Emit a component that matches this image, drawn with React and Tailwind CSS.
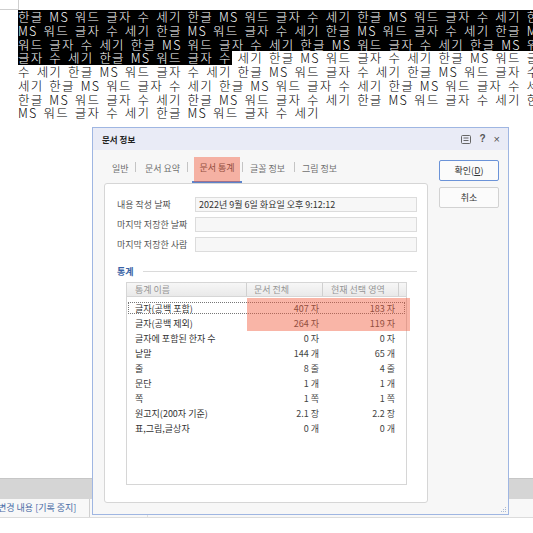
import React from 'react';

const lines = [
  { full: true, text: '한글 MS 워드 글자 수 세기 한글 MS 워드 글자 수 세기 한글 MS 워드 글자 수 세기 한글 MS' },
  { full: true, text: 'MS 워드 글자 수 세기 한글 MS 워드 글자 수 세기 한글 MS 워드 글자 수 세기 한글 MS 워드' },
  { full: true, text: '워드 글자 수 세기 한글 MS 워드 글자 수 세기 한글 MS 워드 글자 수 세기 한글 MS 워드' },
  { sel: '글자 수 세기 한글 MS 워드 글자 수', text: ' 세기 한글 MS 워드 글자 수 세기 한글 MS 워드 글자 수' },
  { text: '수 세기 한글 MS 워드 글자 수 세기 한글 MS 워드 글자 수 세기 한글 MS 워드 글자 수' },
  { text: '세기 한글 MS 워드 글자 수 세기 한글 MS 워드 글자 수 세기 한글 MS 워드 글자 수 세기' },
  { text: '한글 MS 워드 글자 수 세기 한글 MS 워드 글자 수 세기 한글 MS 워드 글자 수 세기 한글' },
  { text: 'MS 워드 글자 수 세기 한글 MS 워드 글자 수 세기' },
];

const stats = [
  ['글자(공백 포함)', '407 자', '183 자'],
  ['글자(공백 제외)', '264 자', '119 자'],
  ['글자에 포함된 한자 수', '0 자', '0 자'],
  ['낱말', '144 개', '65 개'],
  ['줄', '8 줄', '4 줄'],
  ['문단', '1 개', '1 개'],
  ['쪽', '1 쪽', '1 쪽'],
  ['원고지(200자 기준)', '2.1 장', '2.2 장'],
  ['표,그림,글상자', '0 개', '0 개'],
];

function Sep() {
  return <span className="w-px h-[10px] bg-[#c4c4c4] self-center" />;
}

function Field({ label, value }) {
  return (
    <div className="flex items-center h-[15px] mb-[5px]">
      <div className="w-[90px] pl-[12px] whitespace-nowrap text-[#555]">{label}</div>
      <div className="w-[222px] h-[15px] border border-[#dcdcdc] bg-[#f7f7f7] flex items-center pl-[3px] whitespace-nowrap text-[#333]">
        {value}
      </div>
    </div>
  );
}

function DocInfoDialog() {
  return (
    <div className="absolute left-[92px] top-[127px] w-[417px] h-[388px] border border-[#9fb6e2] bg-[#f7f7f7] flex flex-col font-['Noto_Sans_CJK_KR',sans-serif] text-[9px] leading-none text-[#333]">
      {/* title bar */}
      <div className="h-[22px] bg-[#e9ebf6] flex items-center pl-[9px] pr-[8px]">
        <span className="text-[8.5px] font-bold text-[#222]">문서 정보</span>
        <div className="ml-auto flex items-center gap-[8px] text-[#555]">
          <svg width="10" height="9" viewBox="0 0 10 9" fill="none" stroke="#666" strokeWidth="1">
            <rect x="0.5" y="0.5" width="9" height="8" rx="1" />
            <line x1="2.5" y1="3" x2="7.5" y2="3" />
            <line x1="2.5" y1="5.5" x2="7.5" y2="5.5" />
          </svg>
          <span className="font-bold text-[10px] font-['Liberation_Sans',sans-serif]">?</span>
          <span className="text-[11px] font-['Liberation_Sans',sans-serif]">×</span>
        </div>
      </div>

      {/* body */}
      <div className="flex flex-1 pl-[11px]">
        <div className="w-[324px] flex flex-col">
          {/* tabs */}
          <div className="h-[33px] flex items-stretch pl-[8px] text-[#707070] whitespace-nowrap">
            <span className="w-[23px] flex items-center pt-[3px]">일반</span>
            <Sep />
            <span className="ml-[9px] w-[42px] flex items-center pt-[3px]">문서 요약</span>
            <Sep />
            <span className="ml-[4px] w-[50px] flex items-center justify-center pt-[3px] border-b-2 border-[#5d84cc] text-[#444]">
              문서 통계
            </span>
            <Sep />
            <span className="ml-[7px] w-[44px] flex items-center pt-[3px]">글꼴 정보</span>
            <Sep />
            <span className="ml-[7px] flex items-center pt-[3px]">그림 정보</span>
          </div>

          {/* panel */}
          <div className="h-[320px] border border-[#d6d6d6] rounded-[3px] bg-white pt-[13px]">
            <Field label="내용 작성 날짜" value="2022년 9월 6일 화요일 오후 9:12:12" />
            <Field label="마지막 저장한 날짜" value="" />
            <Field label="마지막 저장한 사람" value="" />

            <div className="flex items-center mt-[13px] pl-[12px] pr-[10px] h-[12px]">
              <span className="font-bold text-[#3963a6]">통계</span>
              <span className="flex-1 h-px bg-[#dadada] ml-[9px]" />
            </div>

            {/* table */}
            <div className="ml-[21px] mt-[5px] w-[281px] h-[203px] border border-[#d6d6d6] whitespace-nowrap">
              <div className="h-[14px] flex bg-gradient-to-b from-[#f7f7f7] to-[#e9e9e9] border-b border-[#d6d6d6] text-[#959595]">
                <div className="w-[120px] pl-[8px] flex items-center border-r border-[#d0d0d0]">통계 이름</div>
                <div className="w-[76px] pl-[7px] flex items-center border-r border-[#d0d0d0]">문서 전체</div>
                <div className="w-[76px] pl-[8px] flex items-center border-r border-[#d0d0d0]">현재 선택 영역</div>
                <div className="flex-1" />
              </div>
              <div className="pt-[4px] px-px">
                {stats.map((row, i) => (
                  <div
                    key={row[0]}
                    className={
                      i === 0
                        ? 'h-[12px] mt-[1px] mb-[2px] flex items-center outline outline-1 outline-dotted outline-[#777] -outline-offset-1'
                        : 'h-[15px] flex items-center'
                    }
                  >
                    <div className="w-[119px] pl-[7px] text-[#333]">{row[0]}</div>
                    <div className="w-[76px] pr-[4px] text-right text-[#444]">{row[1]}</div>
                    <div className="w-[76px] pr-[4px] text-right text-[#444]">{row[2]}</div>
                  </div>
                ))}
              </div>
            </div>
          </div>
        </div>

        {/* buttons */}
        <div className="ml-[11px] pt-[10px] flex flex-col gap-[6px]">
          <button className="w-[60px] h-[21px] border border-[#6b93d8] rounded-[2px] bg-[#fbfbfb] text-[9px] text-[#333] flex items-center justify-center">
            확인(<span className="underline">D</span>)
          </button>
          <button className="w-[60px] h-[21px] border border-[#d2d2d2] rounded-[2px] bg-[#fbfbfb] text-[9px] text-[#333] flex items-center justify-center">
            취소
          </button>
        </div>
      </div>

      {/* annotation highlights */}
      <div className="absolute left-[101px] top-[29px] w-[46px] h-[25px] bg-[#f25a3c]/45 pointer-events-none" />
      <div className="absolute left-[154px] top-[170px] w-[163px] h-[33px] bg-[#f25a3c]/45 pointer-events-none" />

      {/* resize grip */}
      <svg className="absolute right-[1px] bottom-[1px]" width="7" height="7" viewBox="0 0 7 7" fill="#a9b9d6">
        <rect x="5" y="1" width="1" height="1" />
        <rect x="3" y="3" width="1" height="1" />
        <rect x="5" y="3" width="1" height="1" />
        <rect x="1" y="5" width="1" height="1" />
        <rect x="3" y="5" width="1" height="1" />
        <rect x="5" y="5" width="1" height="1" />
      </svg>
    </div>
  );
}

export default function App() {
  return (
    <div className="relative w-[533px] h-[533px] overflow-hidden bg-white">
      {/* page corner mark */}
      <div className="h-[10px] w-[19px] border-r border-b border-[#cfcfcf]" />

      {/* document text */}
      <div className="font-['Noto_Sans_CJK_KR',sans-serif] font-light text-[12.5px] leading-[13.75px] tracking-[1.2px] [word-spacing:2px] whitespace-nowrap text-black">
        {lines.map((l, i) => (
          <div key={i} className={l.full ? 'h-[13.75px] ml-[18px] bg-black text-white' : 'h-[13.75px] pl-[18px]'}>
            {l.sel && (
              <span className="inline-block h-[13.75px] align-top bg-black text-white">{l.sel}</span>
            )}
            <span>{l.text}</span>
          </div>
        ))}
      </div>

      {/* scroll band + status bar */}
      <div className="mt-[358px] h-[21px] bg-[#d5d5d5] border-t border-[#c6c6c6]" />
      <div className="h-[19px] bg-[#f8f8f8] border-b border-[#dcdcdc] flex items-center font-['Noto_Sans_CJK_KR',sans-serif] text-[9px] text-[#4a6ca6]">
        <span className="ml-[-2px] w-[91px] whitespace-nowrap">변경 내용 [기록 중지]</span>
        <span className="w-px h-full bg-[#d0d0d0]" />
        <span className="ml-[57px] w-px h-full bg-[#dedede]" />
      </div>

      <DocInfoDialog />
    </div>
  );
}
